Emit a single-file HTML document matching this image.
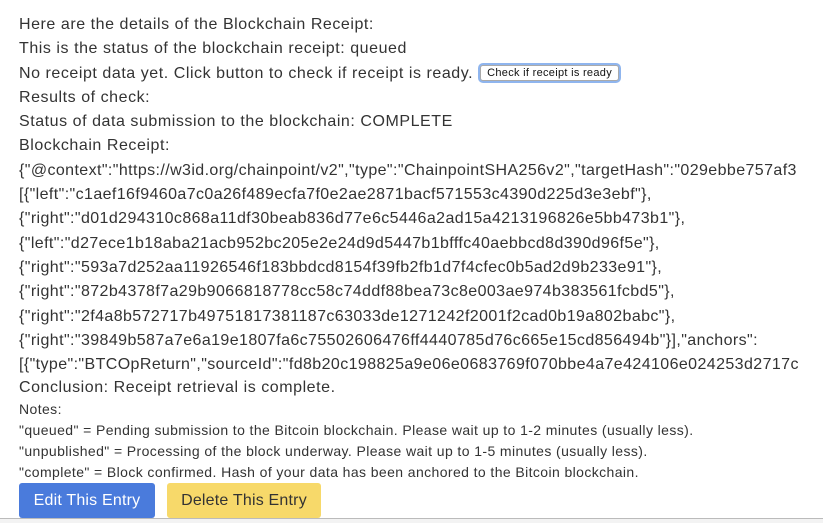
<!DOCTYPE html>
<html><head><meta charset="utf-8"><style>
html,body{margin:0;padding:0;background:#fff;width:823px;height:522px;overflow:hidden;}
body{font-family:"Liberation Sans",Helvetica,Arial,sans-serif;color:#333;}
.c{position:absolute;left:19px;top:13px;white-space:nowrap;}
.l{font-size:16px;line-height:24.3px;height:24.3px;letter-spacing:0.55px;}
.h{letter-spacing:0.4px;}
.n{font-size:14px;line-height:21px;height:21px;letter-spacing:0.4px;}
.chk{display:inline-block;font-size:11px;line-height:14px;padding:0 6px;border:1px solid #aaa;border-radius:3px;box-shadow:0 0 0 2px #8fb5ee;color:#111;background:#fff;vertical-align:2px;margin-left:2px;letter-spacing:0.3px;}
.btn{position:absolute;top:483px;height:35px;line-height:35px;font-size:16px;border-radius:3px;text-align:center;letter-spacing:0.2px;}
.bar{position:absolute;left:0;top:518px;width:823px;height:4px;border-top:1px solid #bbb;background:#f3f3f3;}
</style></head><body>
<div class="c">
<div class="l">Here are the details of the Blockchain Receipt:</div>
<div class="l">This is the status of the blockchain receipt: queued</div>
<div class="l">No receipt data yet. Click button to check if receipt is ready. <span class="chk">Check if receipt is ready</span></div>
<div class="l">Results of check:</div>
<div class="l">Status of data submission to the blockchain: COMPLETE</div>
<div class="l">Blockchain Receipt:</div>
<div class="l h">{"@context":"https://w3id.org/chainpoint/v2","type":"ChainpointSHA256v2","targetHash":"029ebbe757af3</div>
<div class="l h">[{"left":"c1aef16f9460a7c0a26f489ecfa7f0e2ae2871bacf571553c4390d225d3e3ebf"},</div>
<div class="l h">{"right":"d01d294310c868a11df30beab836d77e6c5446a2ad15a4213196826e5bb473b1"},</div>
<div class="l h">{"left":"d27ece1b18aba21acb952bc205e2e24d9d5447b1bfffc40aebbcd8d390d96f5e"},</div>
<div class="l h">{"right":"593a7d252aa11926546f183bbdcd8154f39fb2fb1d7f4cfec0b5ad2d9b233e91"},</div>
<div class="l h">{"right":"872b4378f7a29b9066818778cc58c74ddf88bea73c8e003ae974b383561fcbd5"},</div>
<div class="l h">{"right":"2f4a8b572717b49751817381187c63033de1271242f2001f2cad0b19a802babc"},</div>
<div class="l h">{"right":"39849b587a7e6a19e1807fa6c75502606476ff4440785d76c665e15cd856494b"}],"anchors":</div>
<div class="l h">[{"type":"BTCOpReturn","sourceId":"fd8b20c198825a9e06e0683769f070bbe4a7e424106e024253d2717c</div>
<div class="l" style="height:22px;line-height:22px">Conclusion: Receipt retrieval is complete.</div>
<div class="n">Notes:</div>
<div class="n">"queued" = Pending submission to the Bitcoin blockchain. Please wait up to 1-2 minutes (usually less).</div>
<div class="n">"unpublished" = Processing of the block underway. Please wait up to 1-5 minutes (usually less).</div>
<div class="n">"complete" = Block confirmed. Hash of your data has been anchored to the Bitcoin blockchain.</div>
</div>
<div class="btn" style="left:19px;width:136px;background:#4a7bdc;color:#fff;">Edit This Entry</div>
<div class="btn" style="left:167px;width:154px;background:#f7d96a;color:#333;">Delete This Entry</div>
<div class="bar"></div>
</body></html>
